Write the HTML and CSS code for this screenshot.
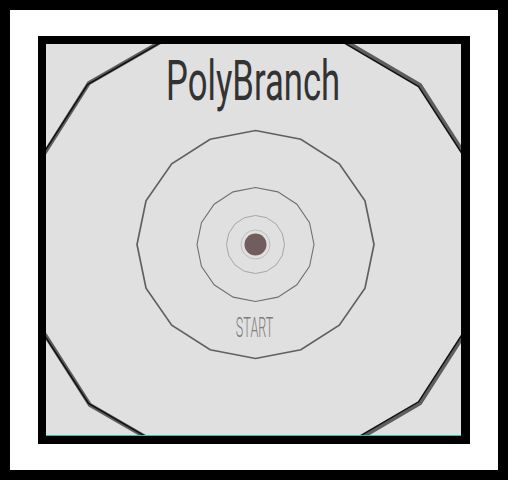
FILE: index.html
```html
<!DOCTYPE html>
<html>
<head>
<meta charset="utf-8">
<link rel="stylesheet" href="styles.css">
</head>
<body>
<div class="screen">
  <div class="frame">
    <div class="canvas">
      <svg class="scene" width="415" height="392" viewBox="0 0 415 392">
        <polygon class="outer" points="208.5,-56 374,41 476,200 374,359.3 208.5,456 44,361 -59,200 43,39"/>
        <polygon class="outer-shadow" points="207,-54.5 372.5,42.5 474.5,200 372.5,357.8 207,454.5 42.5,359.5 -60.5,200 41.5,40.5"/>
        <polygon class="ring-a" points="209.5,86.5 254.85,95.18 293.29,119.89 318.98,156.87 328,200.5 318.98,244.13 293.29,281.11 254.85,305.82 209.5,314.5 164.15,305.82 125.71,281.11 100.02,244.13 91,200.5 100.02,156.87 125.71,119.89 164.15,95.18"/>
        <polygon class="ring-b" points="209.5,143.5 231.89,147.84 250.87,160.2 263.55,178.69 268,200.5 263.55,222.31 250.87,240.8 231.89,253.16 209.5,257.5 187.11,253.16 168.13,240.8 155.45,222.31 151,200.5 155.45,178.69 168.13,160.2 187.11,147.84"/>
        <polygon class="ring-c" points="209.5,171.5 220.6,173.71 230.01,179.99 236.29,189.4 238.5,200.5 236.29,211.6 230.01,221.01 220.6,227.29 209.5,229.5 198.4,227.29 188.99,221.01 182.71,211.6 180.5,200.5 182.71,189.4 188.99,179.99 198.4,173.71"/>
        <circle class="ring-d" cx="209.5" cy="200.5" r="14.5"/>
        <circle class="dot" cx="209.5" cy="200.5" r="11"/>
      </svg>
      <h1 class="title"><span>PolyBranch</span></h1>
      <div class="start"><span>START</span></div>
    </div>
  </div>
</div>
</body>
</html>
```
FILE: styles.css
```css
html, body {
  margin: 0;
  padding: 0;
  background: #ffffff;
}
.screen {
  box-sizing: border-box;
  width: 508px;
  height: 480px;
  border: 10px solid #000;
  background: #fff;
  display: flex;
  align-items: center;
  justify-content: center;
}
.frame {
  border: 8px solid #000;
  border-right-width: 9px;
  display: flex;
}
.canvas {
  position: relative;
  width: 415px;
  height: 391px;
  background: #e0e0e0;
  border-bottom: 1px solid #2fc3a6;
  overflow: hidden;
  display: flex;
  flex-direction: column;
  align-items: center;
}
.scene {
  position: absolute;
  left: 0;
  top: 0;
}
.outer {
  fill: none;
  stroke: #5e5e5e;
  stroke-width: 4;
}
.outer-shadow {
  fill: none;
  stroke: #111;
  stroke-width: 1.5;
}
.ring-a {
  fill: none;
  stroke: #606060;
  stroke-width: 1.7;
}
.ring-b {
  fill: none;
  stroke: #707070;
  stroke-width: 1.1;
}
.ring-c {
  fill: none;
  stroke: #a6a6a6;
  stroke-width: 1;
}
.ring-d {
  fill: none;
  stroke: #bdbdbd;
  stroke-width: 1;
}
.dot {
  fill: #715d5d;
}
.title {
  position: relative;
  margin: 10px 0 0 0;
  font-family: Roboto, "Liberation Sans", sans-serif;
  font-weight: 400;
  font-size: 55px;
  line-height: 55px;
  color: #333;
}
.title span {
  display: inline-block;
  transform: scaleX(0.63);
}
.start {
  position: relative;
  margin-top: 205px;
  font-family: Roboto, "Liberation Sans", sans-serif;
  font-weight: 300;
  font-size: 28px;
  line-height: 28px;
  color: #7c7c7c;
}
.start span {
  display: inline-block;
  transform: scaleX(0.45);
  margin-left: 3px;
}
```
